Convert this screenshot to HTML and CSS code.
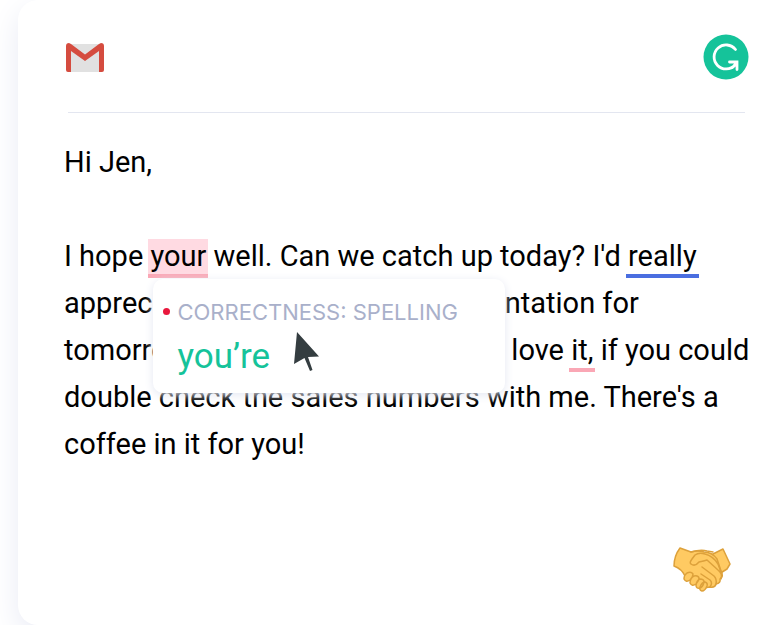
FILE: index.html
```html
<!DOCTYPE html>
<html lang="en">
<head>
<meta charset="utf-8">
<title>Email draft</title>
<link rel="stylesheet" href="styles.css">
</head>
<body>
<main class="card">
  <header class="bar">
    <svg class="gmail" viewBox="0 0 38 30" role="img" aria-label="Gmail">
      <path fill="#e1e1e1" d="M2 1h34v28H2z"/>
      <path fill="#d54c3f" d="M0 3Q0 0 3 0L5 1 19 11.500 33 1l2-1q3 0 3 3v24q0 2-2 2h-3V8L19 18 5 8v21H2q-2 0-2-2z"/>
    </svg>
    <svg class="brand" viewBox="0 0 46 46" role="img" aria-label="Grammarly">
      <circle cx="23" cy="23" r="22.500" fill="#15c39a"/>
      <path d="M32.500 15.500A12 12 0 1 0 32 31M26.500 28H34V35.500M33.500 28.500l-4 5" fill="none" stroke="#fff" stroke-width="2.800" stroke-linecap="round"/>
    </svg>
  </header>
  <article class="message">
    <p>Hi Jen,</p>
    <p>I hope <span class="anchor"><mark class="error active">your</mark><span class="popup" role="dialog" aria-label="Suggestion">
        <span class="category">CORRECTNESS: SPELLING</span>
        <button class="fix" type="button">you’re</button>
        <svg class="cursor" viewBox="0 0 26 40" aria-hidden="true"><path fill="#343d40" d="M3 0 25 24.500 14 25 18.500 38 16 39 10.500 26 0 32z"/></svg>
      </span></span> well. Can we catch up today? I'd <mark class="clarity">really</mark><br>
      appreciate your ideas on my presentation for<br>
      tomorrow's group meeting. And I'd love <mark class="error">it,</mark> if you could<br>
      double check the sales numbers with me. There's a<br>
      coffee in it for you!</p>
  </article>
  <footer class="foot">
    <svg class="shake" viewBox="0 0 58 46" role="img" aria-label="Handshake" stroke="#dda13b" stroke-width="1.500" stroke-linecap="round" stroke-linejoin="round" fill="#ffca62">
      <path d="M38 8 50 2 57 17 54 22 46 27 36 19z"/>
      <path d="M7 1 18 5Q25 3 31 5 39 5 44 12L48 24Q51 29 47 32 48 36 43 37 42 41 37 40L30 41 12 29Q9 22 1 19 1 9 7 1z"/>
      <path d="M18 5Q28 2 34 4l6 1" fill="none"/>
      <path d="M18 17Q16 16 19 12L22 8Q26 5 32 7 40 9 45 17L48 25M18 17q4 3 8-2 5-1 8-2l11 10q5 4 3 9M29 20l12 9q3 3 2 8M28 27l9 6q3 3 0 7" fill="none"/>
      <path d="M14 26q4-2 6 1 0 3-3 6-4 3-6-1 0-4 3-6zM21 29q4-1 5 2 0 3-3 6-4 3-6-1 0-5 4-7zM27 32q4 0 4 3-1 5-4 6-4 1-4-3 1-5 4-6zM32 35q3 1 2 4-2 5-5 5-3-1-2-4 2-5 5-5z"/>
    </svg>
  </footer>
</main>
</body>
</html>
```

FILE: styles.css
```css
* {
  box-sizing: border-box;
}

body {
  margin: 0;
  padding-left: 18px;
  background: #fff;
  color: #000;
  font-family: Roboto, "Liberation Sans", sans-serif;
  overflow: hidden;
}

.card {
  display: flex;
  flex-direction: column;
  min-height: 100vh;
  padding: 0 30px 32px 46px;
  border-radius: 20px 0 0 20px;
  background: #fff;
  box-shadow: 0 10px 30px #e9ebf5;
}

.bar {
  display: flex;
  align-items: center;
  justify-content: space-between;
  height: 113px;
  margin: 0 6px 0 4px;
  padding-top: 2px;
  border-bottom: 1px solid #e3e6f0;
}

.gmail {
  width: 38px;
  height: 30px;
  margin: 2px 0 0 -2px;
}

.brand {
  width: 46px;
  height: 46px;
  margin-right: -4px;
}

.message {
  padding-top: 26px;
  font-size: 29px;
  line-height: 47px;
  white-space: nowrap;
}

.message p {
  margin: 0 0 47px;
}

mark {
  display: inline-block;
  height: 39px;
  padding: 0 2px;
  margin: 0 -2px;
  line-height: 35px;
  background: none;
  color: inherit;
}

.error {
  border-bottom: 4px solid #faa7b5;
}

.active {
  background: #ffdae2;
}

.clarity {
  border-bottom: 4px solid #4a6ee0;
}

.anchor {
  position: relative;
}

.popup {
  position: absolute;
  top: 40px;
  left: 3px;
  display: flex;
  flex-direction: column;
  align-items: flex-start;
  width: 352px;
  height: 114px;
  padding: 17px 24px;
  border-radius: 10px;
  background: #fff;
  box-shadow: 0 2px 10px #e4e7f2;
}

.category {
  color: #a9b0ca;
  font-family: Inter, sans-serif;
  font-size: 22px;
  line-height: 32px;
}

.category::before {
  content: "";
  position: absolute;
  top: 29px;
  left: 10px;
  width: 7px;
  height: 7px;
  border-radius: 50%;
  background: #e9173d;
}

.fix {
  padding: 0;
  border: 0;
  background: none;
  color: #15c39a;
  font: inherit;
  font-size: 35px;
  line-height: 58px;
}

.cursor {
  position: absolute;
  top: 53px;
  left: 141px;
  width: 26px;
  height: 40px;
}

.foot {
  display: flex;
  justify-content: flex-end;
  margin-top: auto;
  padding-right: 20px;
}

.shake {
  width: 58px;
  height: 46px;
}
```
